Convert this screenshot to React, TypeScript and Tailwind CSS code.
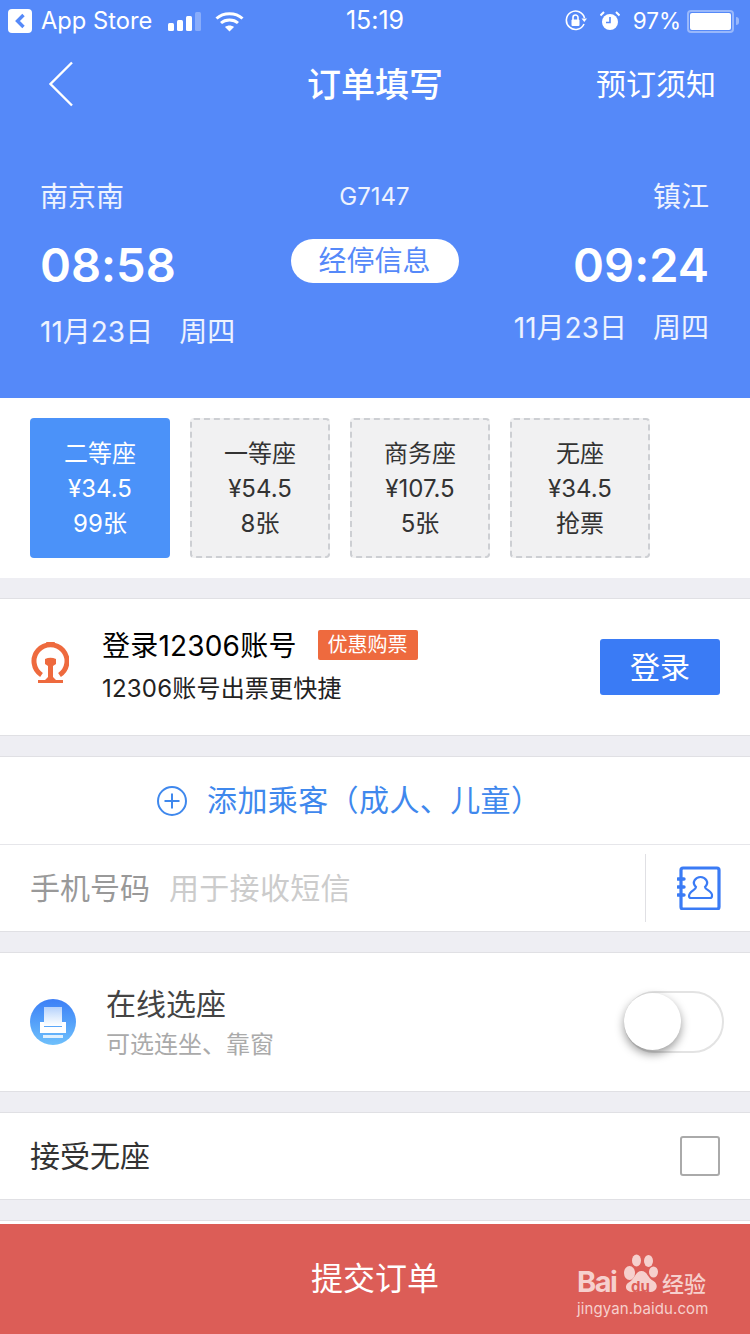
import React from 'react';

const SEATS = [
  { name: '二等座', price: '¥34.5', left: '99张', active: true },
  { name: '一等座', price: '¥54.5', left: '8张', active: false },
  { name: '商务座', price: '¥107.5', left: '5张', active: false },
  { name: '无座', price: '¥34.5', left: '抢票', active: false },
];

const StatusBar = () => (
  <div className="relative flex h-10 items-center pt-[2px] text-[22.5px] text-white">
    <div className="ml-2 flex h-6 w-6 items-center justify-center rounded-[4px] bg-white">
      <svg width="12" height="16" viewBox="0 0 12 16" fill="none" stroke="#5589f9" strokeWidth="3.4">
        <path d="M9.5 2 L3.5 8 L9.5 14" />
      </svg>
    </div>
    <span className="ml-[9px] text-[23.7px]">App Store</span>
    <div className="ml-4 flex items-end gap-[3px]">
      <div className="h-[8px] w-[6px] rounded-[1.5px] bg-white" />
      <div className="h-[11px] w-[6px] rounded-[1.5px] bg-white" />
      <div className="h-[15px] w-[6px] rounded-[1.5px] bg-white" />
      <div className="h-[19px] w-[6px] rounded-[1.5px] bg-white/30" />
    </div>
    <svg className="ml-[14px]" width="29" height="21" viewBox="0 0 29 21" fill="none" stroke="#fff" strokeWidth="3">
      <path d="M1.5 7.5 C8.5 1 20.5 1 27.5 7.5" />
      <path d="M6 12 C10.5 8 18.5 8 23 12" />
      <path d="M14.5 20.5 L10 16 C12.5 14 16.5 14 19 16 Z" fill="#fff" stroke="none" />
    </svg>
    <span className="absolute left-0 right-0 text-center text-[25px] [font-variant-ligatures:no-contextual]">15:19</span>
    <div className="ml-auto mr-[11px] flex items-center">
      <svg width="22" height="22" viewBox="0 0 22 22" fill="none" stroke="#fff" strokeWidth="1.6">
        <path d="M19 14 A9.2 9.2 0 1 1 19.5 8" />
        <path d="M16.5 8.5 L22 8.5 L19.3 12 Z" fill="#fff" stroke="none" />
        <rect x="6.5" y="9.5" width="8" height="6.5" rx="1" fill="#fff" stroke="none" />
        <path d="M8 10 V7.5 A2.5 2.5 0 0 1 13 7.5 V10" />
      </svg>
      <svg className="ml-[13px]" width="20" height="20" viewBox="0 0 20 20">
        <circle cx="10" cy="11" r="8" fill="#fff" />
        <path d="M10 6 V11.5 H6" fill="none" stroke="#5589f9" strokeWidth="1.6" />
        <path d="M0.5 4.5 L4 1 M19.5 4.5 L16 1" stroke="#fff" strokeWidth="2" />
      </svg>
      <span className="ml-[13px]">97%</span>
      <div className="ml-[6px] flex h-[23px] w-[47px] items-center rounded-[4px] border-2 border-white/40 p-[1px]">
        <div className="h-full w-full rounded-[2px] bg-white" />
      </div>
      <div className="ml-[2px] h-[8px] w-[3px] rounded-r-sm bg-white/40" />
    </div>
  </div>
);

const RailLogo = () => (
  <svg className="mb-2" width="38" height="42" viewBox="0 0 38 42" fill="none">
    <path d="M10.5 33 A16.5 16.5 0 1 1 28.5 33" stroke="#ee6a3e" strokeWidth="5" />
    <path d="M14 17 Q19.5 14.5 25 17 V22 L22 24 V35 L25 38 H32 V41 H7 V38 H14 L17 35 V24 L14 22 Z" fill="#ee6a3e" />
    <rect x="15" y="0" width="9" height="4" rx="1" fill="#ee6a3e" />
  </svg>
);

const ContactsIcon = () => (
  <svg width="44" height="44" viewBox="0 0 44 44" fill="none" stroke="#3a7bf5">
    <rect x="4" y="2" width="38" height="41" rx="2" strokeWidth="3.2" />
    <path d="M1 13 H7 M1 21 H7 M1 29 H7" strokeWidth="3.4" strokeLinecap="round" />
    <path d="M19 21 C14 16 19 11 23.5 11 C28 11 33 16 28 21 C28 24 36 25 35 30 C35 32 34 32 33 32 H14 C13 32 12 32 12 30 C12 25 19 24 19 21 Z" strokeWidth="2.2" />
  </svg>
);

const SeatIcon = () => (
  <div className="flex h-[46px] w-[46px] items-center justify-center rounded-full bg-gradient-to-b from-[#3d7ef6] to-[#6fc0fb]">
    <svg width="26" height="31" viewBox="0 0 26 31">
      <defs>
        <linearGradient id="seatTop" x1="0" y1="0" x2="0" y2="1">
          <stop offset="0" stopColor="#ffffff" stopOpacity="0.6" />
          <stop offset="1" stopColor="#ffffff" />
        </linearGradient>
      </defs>
      <rect x="4" y="0" width="18" height="19" fill="url(#seatTop)" />
      <path d="M0 15 H4 V20 H22 V15 H26 V26 H0 Z" fill="#fff" />
      <rect x="3" y="28" width="20" height="3" fill="#fff" fillOpacity="0.8" />
    </svg>
  </div>
);

const Watermark = () => (
  <div className="absolute bottom-[16px] left-[577px] flex w-[134px] flex-col text-[#f6d0cd]">
    <div className="relative flex h-[44px] items-end">
      <span className="w-[44px] text-[29px] leading-[34px] font-bold tracking-[-1.5px]">Bai</span>
      <svg className="mb-[1px]" width="39" height="44" viewBox="0 0 38 44" fill="#f6d0cd">
        <ellipse cx="8" cy="19" rx="5.5" ry="7" />
        <ellipse cx="15" cy="6.5" rx="4.5" ry="6" />
        <ellipse cx="27" cy="7" rx="4.5" ry="6" />
        <ellipse cx="32" cy="18" rx="4.5" ry="5.5" />
        <path d="M20 17 C26 17 26 24 32 27 C38 31 35 38 29 38 C25 38 23 37 20 37 C16 37 14 38 11 38 C4 38 2 31 8 28 C13 25 14 17 20 17 Z" />
      </svg>
      <span className="absolute bottom-[5px] left-[54px] text-[15px] leading-none font-bold text-[#dc5d57]">du</span>
      <span className="mb-[2px] ml-[2px] text-[22px] leading-[26px] font-medium">经验</span>
    </div>
    <span className="mt-[1px] whitespace-nowrap text-[15px] leading-[18px] tracking-[0.1px]">jingyan.baidu.com</span>
  </div>
);

export default function App() {
  return (
    <div
      className="relative flex h-[1334px] w-[750px] flex-col overflow-hidden bg-[#eeeef3]"
      style={{ fontFamily: 'Inter, "Noto Sans CJK SC", sans-serif' }}
    >
      {/* Header */}
      <div className="h-[398px] shrink-0 bg-[#5589f9] text-white">
        <StatusBar />
        <div className="relative flex h-[88px] items-center justify-between pl-[48px] pr-[34px]">
          <svg width="26" height="46" viewBox="0 0 26 46" fill="none" stroke="#fff" strokeWidth="2.4">
            <path d="M24 1.5 L2.5 23 L24 44.5" />
          </svg>
          <span className="absolute left-0 right-0 text-center text-[34px] font-medium">订单填写</span>
          <span className="text-[30px]">预订须知</span>
        </div>
        <div className="mt-[49px] flex justify-between pl-[40px] pr-[41px]">
          <div className="flex flex-col">
            <span className="text-[28px] leading-[40px] text-white/90">南京南</span>
            <span className="mt-[18px] text-[47px] leading-[60px] font-semibold [font-variant-ligatures:no-contextual]">08:58</span>
            <span className="mt-[19px] text-[28px] leading-[36px] text-white/90">
              11月23日<span className="ml-[26px]">周四</span>
            </span>
          </div>
          <div className="flex flex-col items-center">
            <span className="text-[24px] leading-[40px] text-white/90">G7147</span>
            <span className="mt-[22px] flex h-[44px] w-[168px] items-center justify-center rounded-full bg-white text-[28px] text-[#5589f9]">
              经停信息
            </span>
          </div>
          <div className="flex flex-col items-end">
            <span className="text-[28px] leading-[40px] text-white/90">镇江</span>
            <span className="mt-[18px] text-[47px] leading-[60px] font-semibold [font-variant-ligatures:no-contextual]">09:24</span>
            <span className="mt-[15px] text-[28px] leading-[36px] text-white/90">
              11月23日<span className="ml-[26px]">周四</span>
            </span>
          </div>
        </div>
      </div>

      {/* Seat types */}
      <div className="flex h-[180px] shrink-0 gap-5 bg-white pl-[30px] pt-5">
        {SEATS.map((seat) => (
          <div
            key={seat.name}
            className={`flex h-[140px] w-[140px] flex-col items-center justify-center rounded-[4px] text-[24px] leading-[35px] ${
              seat.active
                ? 'bg-[#4b92f9] text-white'
                : 'border-2 border-dashed border-[#cdcfd3] bg-[#f1f1f2] text-[#333]'
            }`}
          >
            <span>{seat.name}</span>
            <span>{seat.price}</span>
            <span>{seat.left}</span>
          </div>
        ))}
      </div>

      {/* Login */}
      <div className="mt-5 flex h-[138px] shrink-0 items-center border-y border-[#e0e0e4] bg-white pl-[31px] pr-[30px]">
        <RailLogo />
        <div className="mb-[6px] ml-[33px] flex flex-col">
          <div className="flex items-center">
            <span className="text-[28px] leading-[40px] tracking-[0.2px] text-black">登录12306账号</span>
            <span className="-mt-[2px] ml-[21px] flex h-[30px] w-[100px] items-center justify-center rounded-[2px] bg-[#ee6a3e] text-[20px] text-white">
              优惠购票
            </span>
          </div>
          <span className="mt-[6px] mb-[-3px] text-[24px] leading-[34px] tracking-[0.2px] text-[#222]">12306账号出票更快捷</span>
        </div>
        <button className="ml-auto h-14 w-[120px] rounded-[3px] bg-[#3a7bf5] text-[30px] text-white">登录</button>
      </div>

      {/* Passenger + phone */}
      <div className="mt-5 shrink-0 border-y border-[#e0e0e4] bg-white">
        <div className="flex h-[88px] items-center border-b border-[#e6e6ea] pl-[157px]">
          <svg width="30" height="30" viewBox="0 0 30 30" fill="none" stroke="#3f88ed" strokeWidth="2">
            <circle cx="15" cy="15" r="14" />
            <path d="M15 7.5 V22.5 M7.5 15 H22.5" />
          </svg>
          <span className="ml-[20px] text-[30px] tracking-[0.4px] text-[#3f88ed]">添加乘客（成人、儿童）</span>
        </div>
        <div className="flex h-[86px] items-center pl-[30px]">
          <span className="text-[30px] text-[#999]">手机号码</span>
          <span className="ml-[19px] text-[30px] tracking-[0.3px] text-[#ccc]">用于接收短信</span>
          <div className="ml-auto flex h-[68px] w-[105px] items-center border-l border-[#e0e0e4] pl-[31px]">
            <ContactsIcon />
          </div>
        </div>
      </div>

      {/* Online seat selection */}
      <div className="mt-5 flex h-[140px] shrink-0 items-center border-y border-[#e0e0e4] bg-white pl-[30px] pr-[26px]">
        <SeatIcon />
        <div className="ml-[30px] flex flex-col">
          <span className="-mt-[1px] text-[30px] leading-[42px] text-[#444]">在线选座</span>
          <span className="mt-[3px] mb-[-2px] text-[24px] leading-[34px] text-[#aaa]">可选连坐、靠窗</span>
        </div>
        <div className="relative ml-auto h-[62px] w-[100px] rounded-full border-2 border-[#e3e3e3]">
          <div className="absolute -left-[2px] top-[0px] h-[57px] w-[57px] rounded-full bg-white shadow-[0_4px_10px_rgba(0,0,0,0.4)]" />
        </div>
      </div>

      {/* Accept no seat */}
      <div className="mt-5 flex h-[88px] shrink-0 items-center justify-between border-y border-[#e0e0e4] bg-white pl-[30px] pr-[30px]">
        <span className="text-[30px] text-[#333]">接受无座</span>
        <div className="h-10 w-10 rounded-[3px] border-2 border-[#aaa]" />
      </div>

      {/* Submit */}
      <div className="mt-auto border-t border-[#e0e0e4]">
        <div className="flex h-[113px] items-center justify-center border-t-[3px] border-white bg-[#dc5d57]">
          <span className="text-[32px] text-white">提交订单</span>
        </div>
      </div>
      <Watermark />
    </div>
  );
}
